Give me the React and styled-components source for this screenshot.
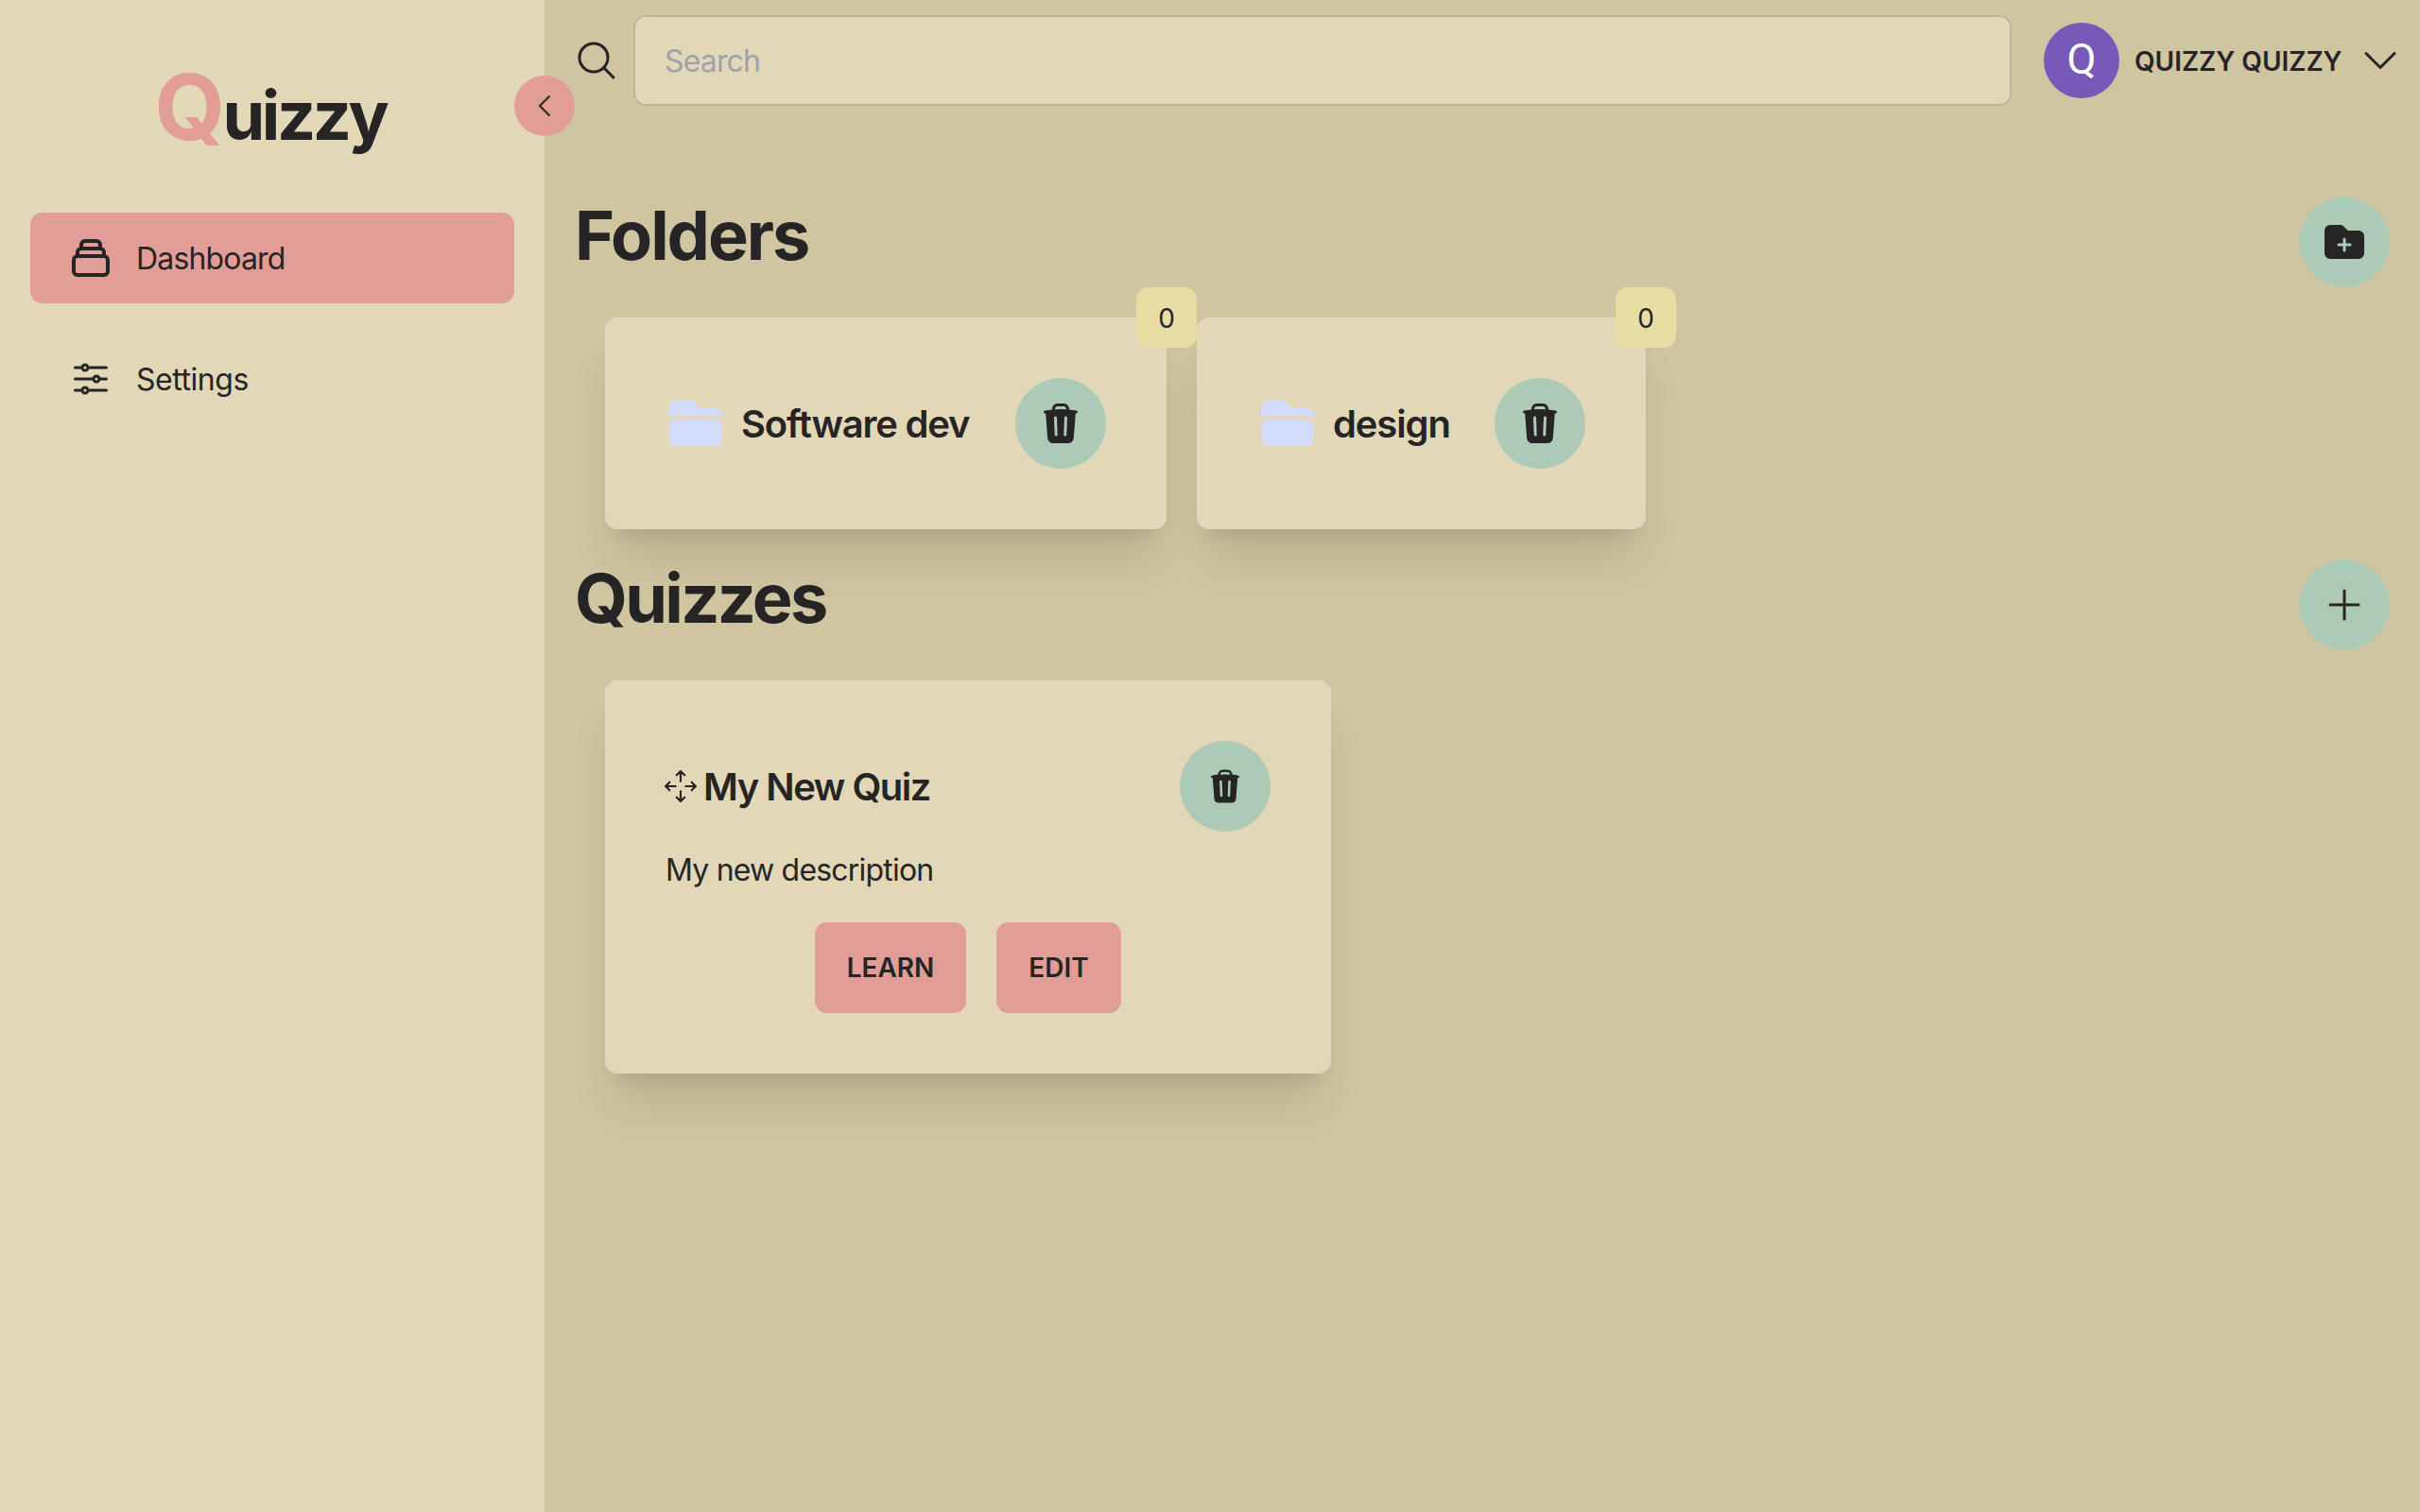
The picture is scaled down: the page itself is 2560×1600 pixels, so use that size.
import React from 'react';
import styled, { createGlobalStyle, ThemeProvider } from 'styled-components';
import {
  HiFolder,
  HiFolderPlus,
  HiOutlineAdjustmentsHorizontal,
  HiOutlineChevronDown,
  HiOutlineChevronLeft,
  HiOutlineMagnifyingGlass,
  HiOutlinePlus,
  HiTrash,
} from 'react-icons/hi2';
import { HiOutlineCollection } from 'react-icons/hi';
import { BsArrowsMove } from 'react-icons/bs';

const theme = {
  base: '#e2d8b7',
  backdrop: '#cfc5a1',
  primary: '#e29e96',
  secondary: '#adcab7',
  accent: '#e8dda2',
  ink: '#272425',
  border: '#bfb49a',
  placeholder: '#9ca3af',
  avatar: '#7858b8',
  folder: '#d2dcfa',
  radius: '12.8px',
};

const GlobalStyle = createGlobalStyle`
  *, *::before, *::after { box-sizing: border-box; }
  body {
    margin: 0;
    background: ${theme.backdrop};
    color: ${theme.ink};
    font-family: Inter, "Liberation Sans", sans-serif;
    font-size: 32px;
    line-height: 48px;
  }
  h1, h2, h3, p { margin: 0; }
  button, input { font: inherit; color: inherit; }
  svg { display: block; flex: none; }
`;

const Layout = styled.div`
  display: flex;
  min-height: 100vh;
`;

const Sidebar = styled.aside`
  position: relative;
  z-index: 1;
  flex: none;
  width: 576px;
  padding: 65px 32px 32px;
  background: ${({ theme }) => theme.base};
`;

const Logo = styled.h1`
  display: flex;
  justify-content: center;
  align-items: baseline;
  height: 160px;
  padding-right: 4px;
  font-size: 72px;
  font-weight: 700;
  line-height: 96px;
  letter-spacing: -3.4px;
`;

const LogoInitial = styled.span`
  color: ${({ theme }) => theme.primary};
  font-size: 96px;
  line-height: 97px;
  letter-spacing: -2.6px;
`;

const CollapseButton = styled.button`
  position: absolute;
  top: 80px;
  right: -32px;
  display: grid;
  place-items: center;
  width: 64px;
  height: 64px;
  padding: 0;
  border: 0;
  border-radius: 50%;
  background: ${({ theme }) => theme.primary};
`;

const Nav = styled.nav`
  display: flex;
  flex-direction: column;
  gap: 32px;
`;

const NavItem = styled.a`
  display: flex;
  align-items: center;
  gap: 24px;
  height: 96px;
  padding: 0 40px;
  border-radius: ${({ theme }) => theme.radius};
  background: ${({ $active, theme }) => ($active ? theme.primary : 'transparent')};
`;

const NavLabel = styled.span`
  padding-top: 2px;
  letter-spacing: ${({ $tracking }) => $tracking}px;
`;

const Main = styled.main`
  flex: 1;
  min-width: 0;
`;

const Header = styled.header`
  display: flex;
  align-items: center;
  height: 128px;
  padding: 0 18px 0 31px;
`;

const SearchInput = styled.input`
  flex: 1;
  height: 96px;
  margin: 0 34px 0 15px;
  padding: 1px 32px 0 31px;
  border: 2px solid ${({ theme }) => theme.border};
  border-radius: ${({ theme }) => theme.radius};
  background: ${({ theme }) => theme.base};
  letter-spacing: -0.85px;
  outline: none;

  &::placeholder {
    color: ${({ theme }) => theme.placeholder};
    opacity: 1;
  }
`;

const Avatar = styled.div`
  display: grid;
  place-items: center;
  width: 80px;
  height: 80px;
  padding-bottom: 3px;
  border-radius: 50%;
  background: ${({ theme }) => theme.avatar};
  color: #fff;
  font-family: Roboto, sans-serif;
  font-size: 45px;
  line-height: 76px;
`;

const UserName = styled.span`
  width: 220px;
  margin: 0 16px;
  padding-top: 2px;
  font-size: 28px;
  font-weight: 600;
  letter-spacing: -0.04px;
  white-space: nowrap;
`;

const Content = styled.div`
  padding: 80px 32px 0;
`;

const SectionHeader = styled.div`
  display: flex;
  justify-content: space-between;
  align-items: flex-start;
  height: 96px;
`;

const SectionTitle = styled.h2`
  font-size: 72px;
  font-weight: 700;
  line-height: 82px;
  letter-spacing: ${({ $tracking }) => $tracking}px;
`;

const CircleButton = styled.button`
  display: grid;
  place-items: center;
  flex: none;
  width: 96px;
  height: 96px;
  padding: 0;
  border: 0;
  border-radius: 50%;
  background: ${({ theme }) => theme.secondary};
`;

const CardRow = styled.div`
  display: flex;
  align-items: flex-start;
  gap: 32px;
  padding: 32px;
`;

const Card = styled.article`
  position: relative;
  width: ${({ $width }) => $width}px;
  padding: 64px;
  border-radius: ${({ theme }) => theme.radius};
  background: ${({ theme }) => theme.base};
  box-shadow: 0 40px 50px -10px rgb(0 0 0 / 0.1), 0 16px 20px -12px rgb(0 0 0 / 0.1);
`;

const CardHeader = styled.div`
  display: flex;
  align-items: center;
  height: 96px;
`;

const CardTitle = styled.h3`
  flex: 1;
  margin-left: ${({ $offset }) => $offset}px;
  padding-top: 2px;
  font-size: 40px;
  font-weight: 600;
  letter-spacing: ${({ $tracking }) => $tracking}px;
  white-space: nowrap;
`;

const CountBadge = styled.span`
  position: absolute;
  top: -32px;
  right: -32px;
  z-index: 1;
  display: grid;
  place-items: center;
  width: 64px;
  height: 64px;
  padding-top: 2px;
  border-radius: ${({ theme }) => theme.radius};
  background: ${({ theme }) => theme.accent};
  font-size: 28px;
`;

const FolderIcon = styled(HiFolder)`
  color: ${({ theme }) => theme.folder};
`;

const MoveIcon = styled(BsArrowsMove)`
  width: 34px;
  height: 34px;
  margin: 0 -1px;
`;

const Description = styled.p`
  margin-top: 17px;
  letter-spacing: -0.8px;
`;

const CardActions = styled.div`
  display: flex;
  justify-content: center;
  gap: 32px;
  margin-top: 31px;
`;

const ActionButton = styled.button`
  width: ${({ $width }) => $width}px;
  height: 96px;
  padding: 0;
  border: 0;
  border-radius: ${({ theme }) => theme.radius};
  background: ${({ theme }) => theme.primary};
  font-size: 28px;
  font-weight: 600;
`;

const folders = [
  { name: 'Software dev', count: 0, width: 594, tracking: -1.21 },
  { name: 'design', count: 0, width: 475, tracking: -1.12 },
];

export default function App() {
  return (
    <ThemeProvider theme={theme}>
      <GlobalStyle />
      <Layout>
        <Sidebar>
          <Logo>
            <LogoInitial>Q</LogoInitial>
            <span>uizzy</span>
          </Logo>
          <CollapseButton aria-label="Collapse sidebar">
            <HiOutlineChevronLeft size={32} />
          </CollapseButton>
          <Nav>
            <NavItem $active>
              <HiOutlineCollection size={48} />
              <NavLabel $tracking={-0.84}>Dashboard</NavLabel>
            </NavItem>
            <NavItem>
              <HiOutlineAdjustmentsHorizontal size={48} />
              <NavLabel $tracking={-0.45}>Settings</NavLabel>
            </NavItem>
          </Nav>
        </Sidebar>
        <Main>
          <Header>
            <HiOutlineMagnifyingGlass size={48} />
            <SearchInput placeholder="Search" />
            <Avatar>Q</Avatar>
            <UserName>QUIZZY QUIZZY</UserName>
            <HiOutlineChevronDown size={48} />
          </Header>
          <Content>
            <SectionHeader>
              <SectionTitle $tracking={-2.08}>Folders</SectionTitle>
              <CircleButton aria-label="Add folder">
                <HiFolderPlus size={48} />
              </CircleButton>
            </SectionHeader>
            <CardRow>
              {folders.map((folder) => (
                <Card key={folder.name} $width={folder.width}>
                  <CardHeader>
                    <FolderIcon size={64} />
                    <CardTitle $offset={16} $tracking={folder.tracking}>
                      {folder.name}
                    </CardTitle>
                    <CircleButton aria-label="Delete folder">
                      <HiTrash size={48} />
                    </CircleButton>
                  </CardHeader>
                  <CountBadge>{folder.count}</CountBadge>
                </Card>
              ))}
            </CardRow>
            <SectionHeader>
              <SectionTitle $tracking={-2.7}>Quizzes</SectionTitle>
              <CircleButton aria-label="Add quiz">
                <HiOutlinePlus size={48} />
              </CircleButton>
            </SectionHeader>
            <CardRow>
              <Card $width={768}>
                <CardHeader>
                  <MoveIcon />
                  <CardTitle $offset={8} $tracking={-1.5}>
                    My New Quiz
                  </CardTitle>
                  <CircleButton aria-label="Delete quiz">
                    <HiTrash size={40} />
                  </CircleButton>
                </CardHeader>
                <Description>My new description</Description>
                <CardActions>
                  <ActionButton $width={160}>LEARN</ActionButton>
                  <ActionButton $width={132}>EDIT</ActionButton>
                </CardActions>
              </Card>
            </CardRow>
          </Content>
        </Main>
      </Layout>
    </ThemeProvider>
  );
}
